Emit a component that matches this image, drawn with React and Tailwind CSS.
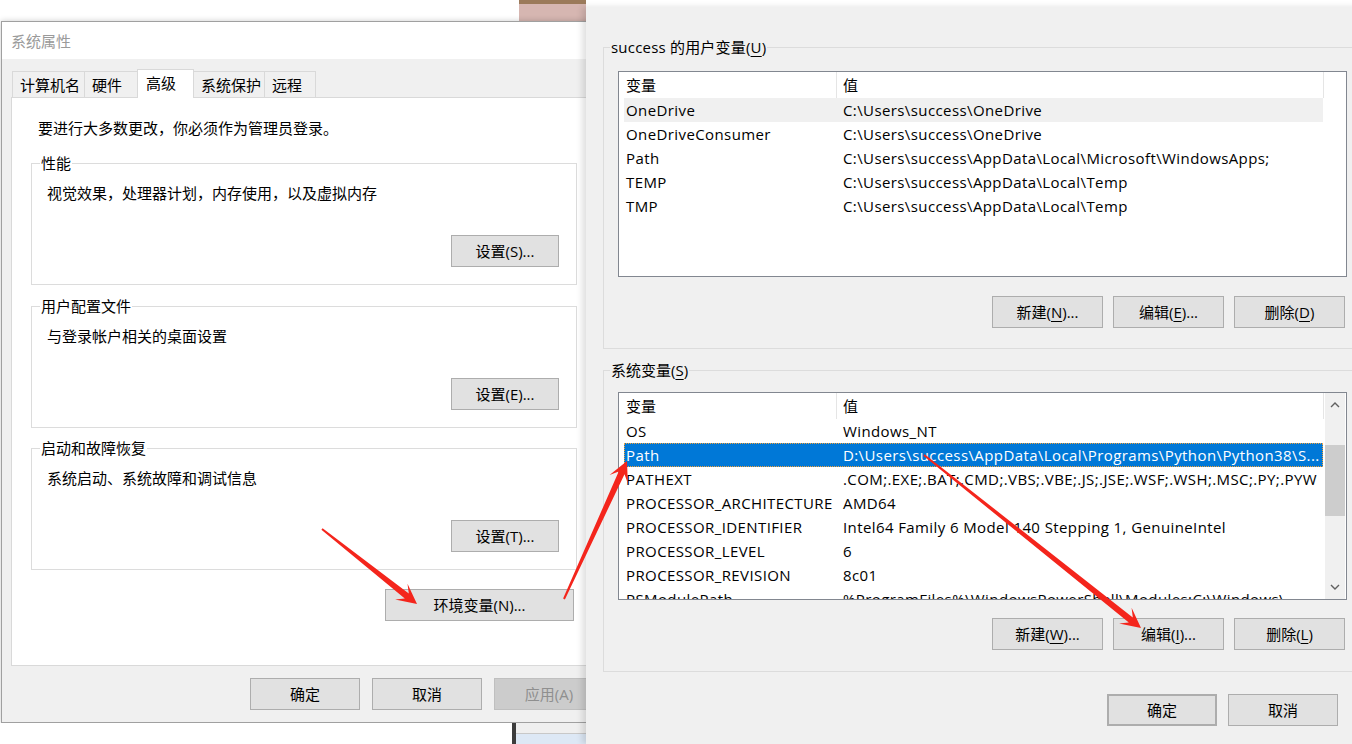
import React from "react";

function Btn({ children, cls = "" }) {
  return (
    <div
      className={`flex items-center justify-center h-[32px] border border-[#adadad] bg-[#e1e1e1] text-black whitespace-nowrap shrink-0 ${cls}`}
    >
      {children}
    </div>
  );
}

function U({ children }) {
  return <span className="underline underline-offset-[3px] decoration-1">{children}</span>;
}

function Group({ title, text, btn, cls = "" }) {
  return (
    <div className={`w-[546px] h-[122px] border border-[#dcdcdc] flex flex-col shrink-0 ${cls}`}>
      <div className="-mt-[11px] ml-[8px] px-[1px] bg-white w-fit leading-[20px]">{title}</div>
      <div className="mt-[10px] ml-[15px] leading-[20px]">{text}</div>
      <Btn cls="mt-auto mb-[17px] mr-[17px] self-end w-[108px]">{btn}</Btn>
    </div>
  );
}

function Chevron({ up }) {
  return (
    <svg width="10" height="6" viewBox="0 0 10 6">
      <polyline
        points={up ? "1,5 5,1 9,5" : "1,1 5,5 9,1"}
        fill="none"
        stroke="#606060"
        strokeWidth="1.4"
      />
    </svg>
  );
}

function ListView({ rows, cls, scroll, selected, hover }) {
  return (
    <div className={`border border-[#828790] bg-white w-[729px] overflow-hidden flex shrink-0 ${cls}`}>
      <div className="w-[705px] flex flex-col shrink-0">
        <div className="h-[26px] flex shrink-0">
          <div className="w-[218px] pl-[7px] flex items-center border-r border-[#e5e5e5]">变量</div>
          <div className="w-[487px] pl-[6px] flex items-center border-r border-[#e5e5e5]">值</div>
        </div>
        {rows.map((r, i) => {
          const isSel = i === selected;
          const isHover = i === hover;
          return (
            <div
              key={i}
              className={`ml-[5px] w-[699px] h-[24px] flex items-center shrink-0 whitespace-nowrap tracking-[0.4px] ${
                isSel
                  ? "bg-[#0078d7] text-white outline-1 outline-dotted outline-[#f2a23a] -outline-offset-1"
                  : isHover
                  ? "bg-[#f0f0f0]"
                  : ""
              }`}
            >
              <div className="w-[212px] pl-[2px] overflow-hidden shrink-0">{r[0]}</div>
              <div className="flex-1 pl-[7px] overflow-hidden">{r[1]}</div>
            </div>
          );
        })}
      </div>
      {scroll && (
        <div className="ml-[1px] w-[20px] bg-[#f0f0f0] flex flex-col items-center shrink-0">
          <div className="h-[24px] flex items-center justify-center">
            <Chevron up />
          </div>
          <div className="mt-[28px] h-[71px] w-[20px] bg-[#cdcdcd]" />
          <div className="mt-auto h-[24px] flex items-center justify-center">
            <Chevron />
          </div>
        </div>
      )}
    </div>
  );
}

function arrowPoints(tail, tip) {
  const [tx, ty] = tail;
  const [hx, hy] = tip;
  const dx = hx - tx;
  const dy = hy - ty;
  const len = Math.hypot(dx, dy);
  const ux = dx / len;
  const uy = dy / len;
  const nx = -uy;
  const ny = ux;
  const p = (b, s) => [hx - ux * b + nx * s, hy - uy * b + ny * s];
  const pts = [
    [tx + nx * 1, ty + ny * 1],
    p(13, 3.2),
    p(20, 10),
    [hx, hy],
    p(20, -10),
    p(13, -3.2),
    [tx - nx * 1, ty - ny * 1],
  ];
  return pts.map((q) => q.map((v) => v.toFixed(1)).join(",")).join(" ");
}

const userRows = [
  ["OneDrive", "C:\\Users\\success\\OneDrive"],
  ["OneDriveConsumer", "C:\\Users\\success\\OneDrive"],
  ["Path", "C:\\Users\\success\\AppData\\Local\\Microsoft\\WindowsApps;"],
  ["TEMP", "C:\\Users\\success\\AppData\\Local\\Temp"],
  ["TMP", "C:\\Users\\success\\AppData\\Local\\Temp"],
];

const sysRows = [
  ["OS", "Windows_NT"],
  ["Path", "D:\\Users\\success\\AppData\\Local\\Programs\\Python\\Python38\\S..."],
  ["PATHEXT", ".COM;.EXE;.BAT;.CMD;.VBS;.VBE;.JS;.JSE;.WSF;.WSH;.MSC;.PY;.PYW"],
  ["PROCESSOR_ARCHITECTURE", "AMD64"],
  ["PROCESSOR_IDENTIFIER", "Intel64 Family 6 Model 140 Stepping 1, GenuineIntel"],
  ["PROCESSOR_LEVEL", "6"],
  ["PROCESSOR_REVISION", "8c01"],
  ["PSModulePath", "%ProgramFiles%\\WindowsPowerShell\\Modules;C:\\Windows\\..."],
];

export default function App() {
  const tabBase = "h-[26px] pl-[7px] flex items-center bg-[#f0f0f0] border-t border-[#d9d9d9] shrink-0";
  return (
    <div className="relative w-[1352px] h-[744px] overflow-hidden bg-white flex text-[15px] leading-[20px] text-black font-['Open_Sans','Noto_Sans_CJK_SC',sans-serif]">
      {/* Left: 系统属性 */}
      <div className="w-[586px] shrink-0 overflow-hidden flex flex-col">
        <div className="h-[21px] flex shrink-0">
          <div className="flex-1 bg-white" />
          <div className="w-[67px] flex flex-col">
            <div className="h-[4px] bg-[#9b7a5a]" />
            <div className="flex-1 bg-[#d6b6b1]" />
          </div>
        </div>
        <div className="ml-[1px] w-[608px] h-[702px] shrink-0 border border-[#a0a0a0] bg-[#f0f0f0] flex flex-col shadow-[0_0_6px_rgba(0,0,0,0.2)]">
          <div className="h-[37px] shrink-0 bg-white pl-[9px] pt-[1px] flex items-center text-[#9a9a9a]">系统属性</div>
          <div className="pt-[10px] px-[9px] flex flex-col">
            <div className="h-[28px] flex items-end pl-[1px]">
              <div className={`${tabBase} w-[72px] border-l`}>计算机名</div>
              <div className={`${tabBase} w-[53px] border-l`}>硬件</div>
              <div className="relative z-10 -mb-[1px] h-[29px] w-[57px] pl-[8px] pb-[3px] flex items-center bg-white border-t border-l border-r border-[#d9d9d9] shrink-0">
                高级
              </div>
              <div className={`${tabBase} w-[70px] pl-[5px]`}>系统保护</div>
              <div className={`${tabBase} w-[52px] border-l border-r`}>远程</div>
            </div>
            <div className="w-[586px] h-[569px] shrink-0 border border-[#d9d9d9] bg-white pt-[20px] pl-[19px] flex flex-col">
              <div className="ml-[7px] leading-[20px]">要进行大多数更改，你必须作为管理员登录。</div>
              <Group cls="mt-[25px]" title="性能" text="视觉效果，处理器计划，内存使用，以及虚拟内存" btn="设置(S)..." />
              <Group cls="mt-[21px]" title="用户配置文件" text="与登录帐户相关的桌面设置" btn="设置(E)..." />
              <Group cls="mt-[20px]" title="启动和故障恢复" text="系统启动、系统故障和调试信息" btn="设置(T)..." />
              <Btn cls="mt-[19px] ml-[354px] w-[189px]">环境变量(N)...</Btn>
            </div>
            <div className="mt-[12px] ml-[239px] flex gap-[12px]">
              <Btn cls="w-[110px]">确定</Btn>
              <Btn cls="w-[110px]">取消</Btn>
              <div className="flex items-center justify-center h-[32px] w-[110px] border border-[#bfbfbf] bg-[#cccccc] text-[#8f8f8f] shrink-0">
                应用(A)
              </div>
            </div>
          </div>
        </div>
        <div className="flex-1 flex">
          <div className="w-[512px] bg-white" />
          <div className="w-[4px] bg-[#3c3c3c]" />
          <div className="flex-1 flex flex-col">
            <div className="h-[10px] bg-[#efefef]" />
            <div className="h-[1px] bg-[#c8c8c8]" />
            <div className="flex-1 bg-[#dde8f5]" />
          </div>
        </div>
      </div>

      {/* Right: 环境变量 */}
      <div className="flex-1 flex flex-col relative z-10">
        <div className="h-[7px] bg-white shrink-0" />
        <div className="flex-1 bg-[#f0f0f0] shadow-[-4px_0_6px_rgba(0,0,0,0.12)] pl-[17px] pt-[40px] flex flex-col">
          <div className="w-[760px] h-[302px] shrink-0 border border-[#dcdcdc] flex flex-col">
            <div className="-mt-[11px] ml-[6px] px-[1px] bg-[#f0f0f0] w-fit tracking-[0.2px]">
              success 的用户变量(<U>U</U>)
            </div>
            <ListView cls="mt-[14px] ml-[14px] h-[206px]" rows={userRows} hover={0} selected={-1} />
            <div className="mt-[19px] ml-[388px] flex gap-[10px]">
              <Btn cls="w-[111px]">新建(<U>N</U>)...</Btn>
              <Btn cls="w-[111px]">编辑(<U>E</U>)...</Btn>
              <Btn cls="w-[111px]">删除(<U>D</U>)</Btn>
            </div>
          </div>
          <div className="mt-[21px] w-[760px] h-[302px] shrink-0 border border-[#dcdcdc] flex flex-col">
            <div className="-mt-[11px] ml-[6px] px-[1px] bg-[#f0f0f0] w-fit">
              系统变量(<U>S</U>)
            </div>
            <ListView cls="mt-[12px] ml-[14px] h-[208px]" rows={sysRows} scroll selected={1} hover={-1} />
            <div className="mt-[18px] ml-[388px] flex gap-[10px]">
              <Btn cls="w-[111px]">新建(<U>W</U>)...</Btn>
              <Btn cls="w-[111px]">编辑(<U>I</U>)...</Btn>
              <Btn cls="w-[111px]">删除(<U>L</U>)</Btn>
            </div>
          </div>
          <div className="mt-[22px] ml-[504px] flex gap-[11px]">
            <Btn cls="w-[110px] border-2 border-[#0078d7]">确定</Btn>
            <Btn cls="w-[110px]">取消</Btn>
          </div>
        </div>
      </div>

      {/* Red annotation arrows */}
      <svg className="absolute inset-0 z-20 pointer-events-none" width="1352" height="744" viewBox="0 0 1352 744">
        <polygon points={arrowPoints([322, 529], [417, 604])} fill="#f4251c" />
        <polygon points={arrowPoints([564, 599], [627, 461])} fill="#f4251c" />
        <polygon points={arrowPoints([924, 455], [1141, 628])} fill="#f4251c" />
      </svg>
    </div>
  );
}
